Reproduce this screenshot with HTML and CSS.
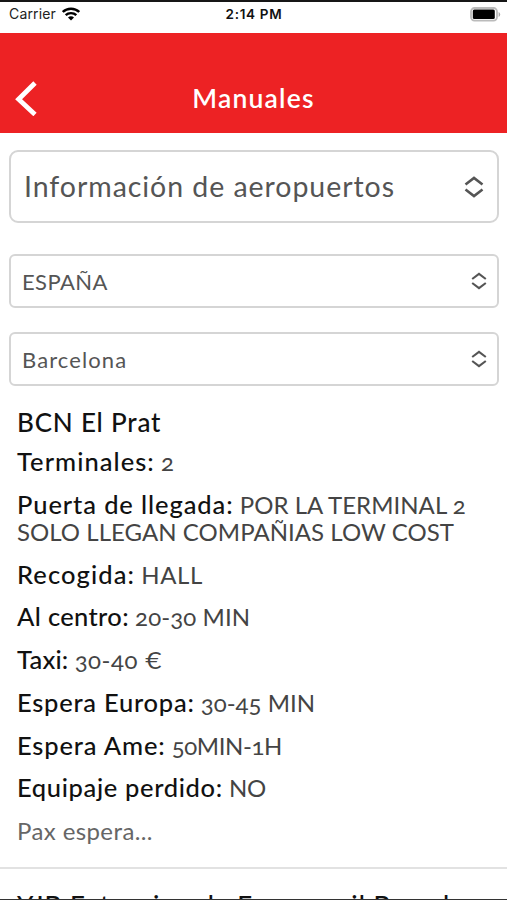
FILE: index.html
```html
<!DOCTYPE html>
<html lang="es">
<head>
<meta charset="utf-8">
<title>Manuales</title>
<link rel="stylesheet" href="styles.css">
</head>
<body>
<div class="screen">
  <div class="status">
    <div class="carrier"><span>Carrier</span>
      <svg width="18" height="14" viewBox="0 0 18 14" fill="none" stroke="#000" stroke-width="2.4"><path d="M.8 5C5.2.6 12.8.6 17.2 5"/><path d="M3.7 8.2c2.8-2.8 7.8-2.8 10.6 0"/><path d="M6 10.4c1.7-1.5 4.3-1.5 6 0l-3 3z" fill="#000" stroke="none"/></svg>
    </div>
    <div class="time">2:14 PM</div>
    <svg class="battery" width="31" height="15" viewBox="0 0 31 15"><rect x="1" y="1" width="26" height="12.6" rx="3.5" fill="#fff" stroke="#bbb" stroke-width="1.8"/><rect x="2.8" y="2.6" width="22" height="9.4" rx="1.5" fill="#000"/><path d="M28.6 5v5q1.6-.8 1.6-2.5T28.6 5z" fill="#aaa"/></svg>
  </div>
  <header class="header">
    <svg class="back" width="24" height="36" viewBox="0 0 24 36" fill="none" stroke="#fff" stroke-width="4.8"><path d="M21 3 4.6 19.2l16.4 15.3"/></svg>
    <h1>Manuales</h1>
  </header>
  <main>
    <div class="select select-lg"><span>Información de aeropuertos</span>
      <svg width="20" height="22" viewBox="0 0 20 22"><path d="M1.5 8.5 10 2l8.500 6.500M1.500 13.500l8.500 6.500 8.500-6.500"/></svg></div>
    <div class="select country"><span>ESPAÑA</span>
      <svg width="16" height="18" viewBox="0 0 20 22"><path d="M1.500 8.500 10 2l8.500 6.500M1.500 13.500l8.500 6.500 8.500-6.500"/></svg></div>
    <div class="select city"><span>Barcelona</span>
      <svg width="16" height="18" viewBox="0 0 20 22"><path d="M1.500 8.500 10 2l8.500 6.500M1.500 13.500l8.500 6.500 8.500-6.500"/></svg></div>
    <section class="airport">
      <h2>BCN El Prat</h2>
      <p class="terminals"><b>Terminales:</b> <span>2</span></p>
      <p class="gate"><b>Puerta de llegada:</b> <span>POR LA TERMINAL 2<br>SOLO LLEGAN COMPAÑIAS LOW COST</span></p>
      <p class="pickup"><b>Recogida:</b> <span>HALL</span></p>
      <p class="center"><b>Al centro:</b> <span>20-30 MIN</span></p>
      <p class="taxi"><b>Taxi:</b> <span>30-40 <i>€</i></span></p>
      <p class="europe"><b>Espera Europa:</b> <span>30-45 MIN</span></p>
      <p class="america"><b>Espera Ame:</b> <span>50MIN-1H</span></p>
      <p class="luggage"><b>Equipaje perdido:</b> <span>NO</span></p>
      <p class="more">Pax espera...</p>
    </section>
    <section class="airport next"><h2>YJB Extension de Ferrocarril Barcelona</h2></section>
  </main>
</div>
</body>
</html>
```
FILE: styles.css
```css
* { box-sizing: border-box; margin: 0; padding: 0; }
body { background: #fff; overflow: hidden; }
.screen {
  height: 900px;
  overflow: hidden;
  display: flex;
  flex-direction: column;
  border-top: 2px solid #161616;
  border-bottom: 1px solid #333;
  font-family: Lato, sans-serif;
  font-variant-numeric: oldstyle-nums;
}
.status {
  flex: none;
  height: 31px;
  padding: 0 6px 7px 9px;
  display: grid;
  grid-template-columns: 1fr auto 1fr;
  align-items: center;
  font: 400 14px/20px Inter, sans-serif;
  color: #222;
}
.carrier { display: flex; align-items: center; gap: 6px; letter-spacing: .15px; }
.time { font-size: 13.5px; font-weight: 600; letter-spacing: .7px; color: #111; margin-left: -2px; }
.battery { justify-self: end; }
.header {
  flex: none;
  height: 100px;
  padding: 30px 14px 0;
  background: #ed2224;
  display: grid;
  grid-template-columns: 24px 1fr 24px;
  align-items: center;
  color: #fff;
}
h1 { text-align: center; font-size: 26.5px; line-height: 32px; font-weight: 600; letter-spacing: 1.2px; }
main { flex: 1; min-height: 0; padding-top: 17px; }
.select {
  height: 54px;
  margin: 0 8px 24px 9px;
  padding: 0 10px 0 11px;
  border: 2px solid #d5d5d5;
  border-radius: 6px;
  display: flex;
  align-items: center;
  justify-content: space-between;
  font-size: 22px;
  color: #555;
}
.select svg { fill: none; stroke: #555; stroke-width: 2.6; }
.select-lg { height: 73px; margin-bottom: 31px; border-radius: 9px; padding: 0 13px; font-size: 28.5px; letter-spacing: .95px; }
.select-lg span { padding-bottom: 2px; }
.country { letter-spacing: .4px; }
.city { letter-spacing: 1.1px; }
.airport { padding: 0 17px; font-size: 24px; line-height: 27px; color: #444; white-space: nowrap; }
.airport h2 { font-size: 26px; line-height: 30px; font-weight: 500; letter-spacing: .8px; color: #111; margin-bottom: 11px; }
.airport p { margin-bottom: 15.75px; }
.airport b { font-size: 25.5px; line-height: 1; font-weight: 500; color: #111; }
.airport i { font-style: normal; font-variant-numeric: lining-nums; }
.city + .airport { margin-top: -3px; }
.terminals b { letter-spacing: 1.05px; }
.gate b { letter-spacing: .9px; }
.gate span { letter-spacing: .04px; }
.pickup b { letter-spacing: 1.1px; }
.pickup span { letter-spacing: .6px; }
.center b { letter-spacing: .35px; }
.center span { letter-spacing: .1px; }
.taxi b { letter-spacing: .2px; }
.taxi span { letter-spacing: .5px; }
.europe b { letter-spacing: .75px; }
.america b { letter-spacing: .85px; }
.america span { letter-spacing: -.4px; }
.luggage b { letter-spacing: .65px; }
.luggage span { letter-spacing: -.4px; }
.airport .more { letter-spacing: .4px; color: #666; margin-bottom: 0; }
.next { margin-top: 23px; padding-top: 21px; border-top: 2px solid #e2e2e2; }
.next h2 { letter-spacing: 1px; }
```
